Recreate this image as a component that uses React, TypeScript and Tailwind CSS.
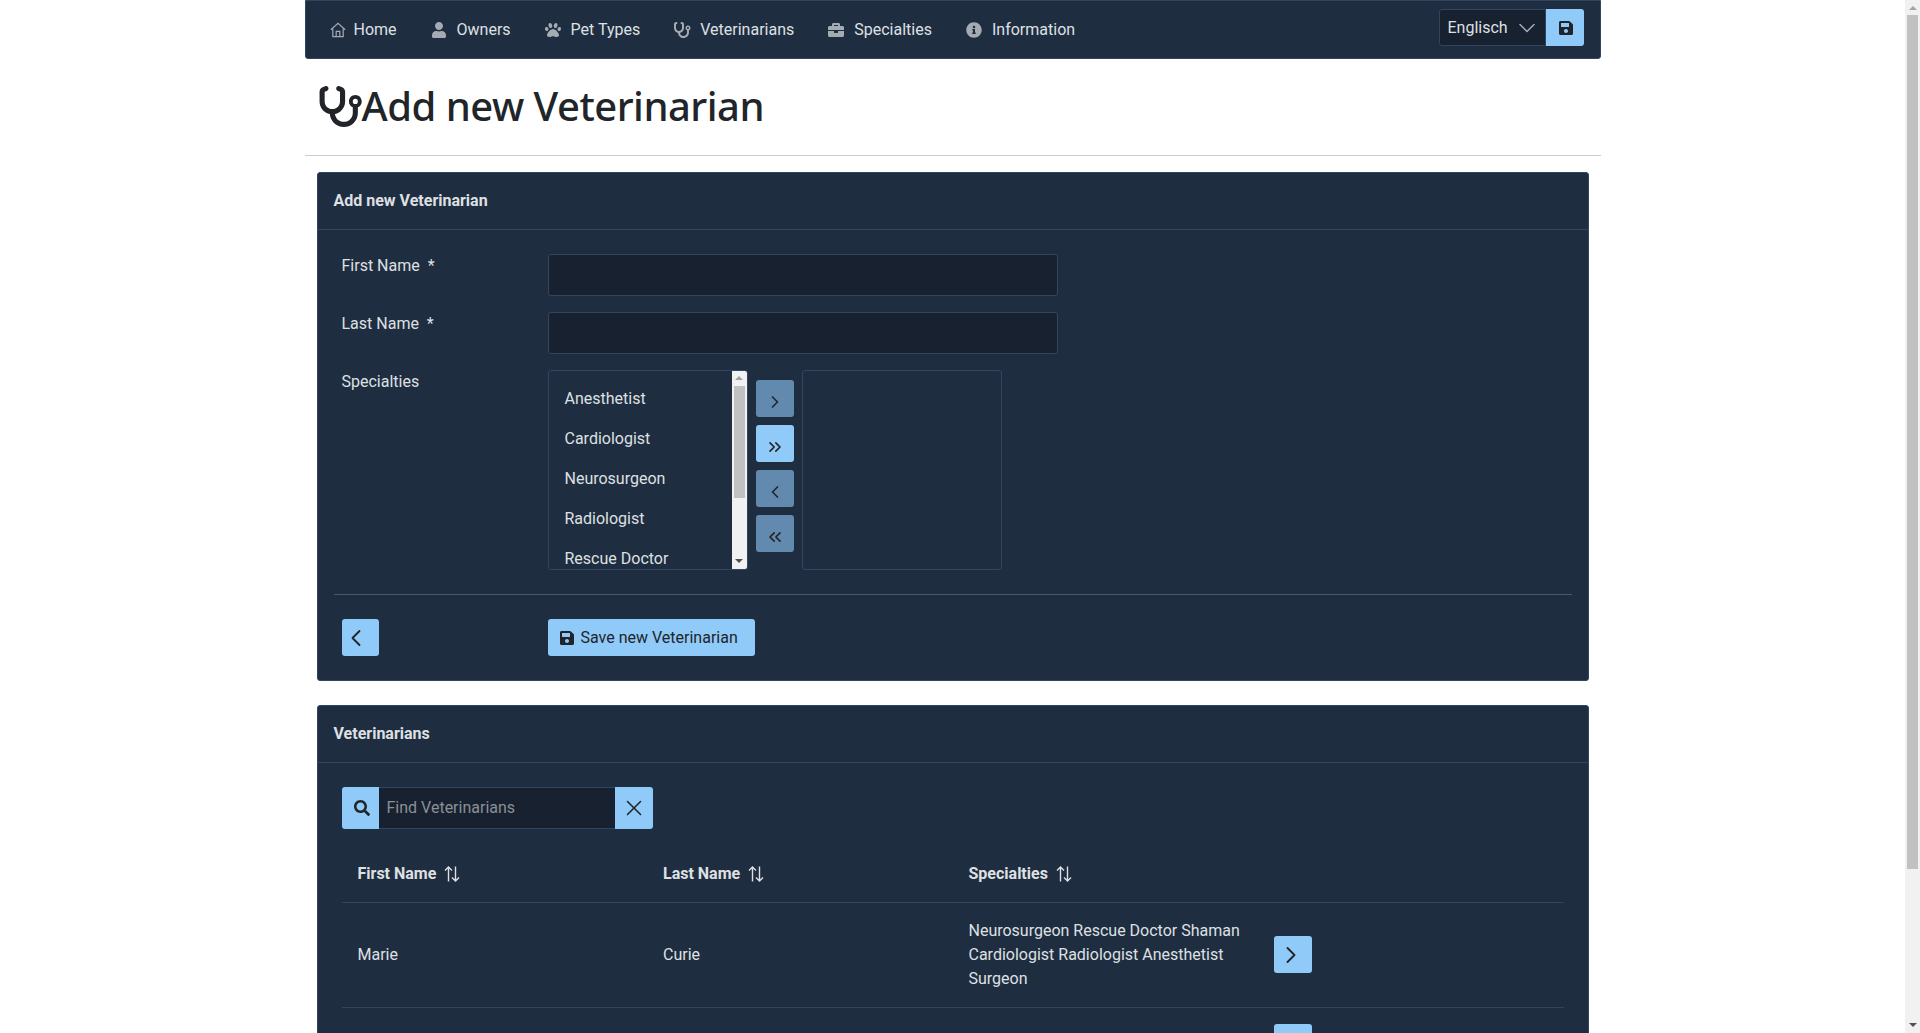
import { FaBriefcase, FaInfoCircle, FaPaw, FaSave, FaSearch, FaUser } from 'react-icons/fa';
import { FaStethoscope } from 'react-icons/fa6';
import { ChevronDown, ChevronLeft, ChevronRight, ChevronsLeft, ChevronsRight, X } from 'lucide-react';
import type { ReactNode } from 'react';

const navItems = [
  { label: 'Owners', icon: <FaUser className="w-[14px] h-[16px]" /> },
  { label: 'Pet Types', icon: <FaPaw className="w-4 h-4" /> },
  { label: 'Veterinarians', icon: <FaStethoscope className="w-[18px] h-4 shrink-0" /> },
  { label: 'Specialties', icon: <FaBriefcase className="w-4 h-4" /> },
  { label: 'Information', icon: <FaInfoCircle className="w-4 h-4" /> },
];

const specialties = ['Anesthetist', 'Cardiologist', 'Neurosurgeon', 'Radiologist', 'Rescue Doctor'];

function HomeIcon() {
  return (
    <svg viewBox="0 0 16 16" className="w-4 h-4" fill="none" stroke="currentColor" strokeWidth="1.2">
      <path d="M.8 7.8 8 1.2l7.2 6.6" />
      <path d="M2.8 6.4V14.6H13.2V6.4" />
      <path d="M6.2 14.6V9.4H9.8V14.6" />
    </svg>
  );
}

function SortIcon() {
  return (
    <svg viewBox="0 0 16 16" className="w-4 h-4" fill="none" stroke="currentColor" strokeWidth="1.4">
      <path d="M4.5 15.5V1M1 4.5 4.5 1 8 4.5" />
      <path d="M11.5 .5V15M8 11.5 11.5 15 15 11.5" />
    </svg>
  );
}

function BlueButton({ children, disabled, className = 'w-[38px]' }: { children: ReactNode; disabled?: boolean; className?: string }) {
  return (
    <button
      className={`flex items-center justify-center h-[37px] rounded-[3px] text-[#212529] ${disabled ? 'bg-[#6289ae]' : 'bg-[#90caf9]'} ${className}`}
    >
      {children}
    </button>
  );
}

function Panel({ title, children }: { title: string; children: ReactNode }) {
  return (
    <section className="bg-[#1f2d40] border border-[#304562] rounded-[3px]">
      <h2 className="h-[57px] flex items-center px-4 font-bold text-base border-b border-[#304562]">{title}</h2>
      {children}
    </section>
  );
}

function FormRow({ label, children }: { label: string; children: ReactNode }) {
  return (
    <div className="flex">
      <label className="w-[206px] pt-[2px] leading-[19px] whitespace-pre">{label}</label>
      {children}
    </div>
  );
}

export default function App() {
  return (
    <div className="h-screen flex overflow-hidden bg-white font-['Roboto',sans-serif] text-base text-[#dee0e3]">
      <main className="flex-1 min-w-0 overflow-hidden">
        <div className="w-[1296px] mx-auto">
          <nav className="h-[59px] flex items-start justify-between p-2 bg-[#1f2d40] border border-[#304562] rounded-b-[3px]">
            <ul className="flex gap-1">
              <li className="h-[41px] flex items-center gap-2 px-4">
                <span className="text-[#a5abb3]"><HomeIcon /></span>
                Home
              </li>
              {navItems.map((item) => (
                <li key={item.label} className="h-[41px] flex items-center gap-2 px-4">
                  <span className="w-4 -ml-[2px] mr-[2px] flex justify-center text-[#a5abb3]">{item.icon}</span>
                  {item.label}
                </li>
              ))}
            </ul>
            <div className="flex mr-2">
              <div className="w-[107px] h-[37px] flex items-center justify-between pl-2 pr-[4px] bg-[#17212f] border border-[#304562] rounded-l-[3px]">
                Englisch
                <ChevronDown className="w-7 h-7 text-[#a5abb3]" strokeWidth={1.3} />
              </div>
              <BlueButton className="w-[38px] rounded-l-none">
                <FaSave className="w-[14px] h-4 ml-[3px]" />
              </BlueButton>
            </div>
          </nav>

          <h1 className="h-[97px] flex items-center pl-[12px] pb-[2px] border-b border-[#cccccc] text-[#212529] text-[40px] tracking-[-0.5px] font-medium font-['Noto_Sans',sans-serif]">
            <FaStethoscope className="w-[46px] h-[41px] -mr-[1px] shrink-0" />
            Add new Veterinarian
          </h1>

          <div className="mx-3 mt-4 flex flex-col gap-6">
            <Panel title="Add new Veterinarian">
              <div className="p-6 px-4">
                <div className="flex flex-col gap-4 px-2">
                  <FormRow label="First Name  *">
                    <input className="w-[510px] h-[42px] bg-[#17212f] border border-[#304562] rounded-[3px]" />
                  </FormRow>
                  <FormRow label="Last Name  *">
                    <input className="w-[510px] h-[42px] bg-[#17212f] border border-[#304562] rounded-[3px]" />
                  </FormRow>
                  <FormRow label="Specialties">
                    <div className="flex">
                      <div className="w-[200px] h-[200px] flex border border-[#304562] rounded-[3px] overflow-hidden">
                        <ul className="flex-1 pt-2 overflow-hidden">
                          {specialties.map((s) => (
                            <li key={s} className="h-10 flex items-center px-4">{s}</li>
                          ))}
                        </ul>
                        <div className="w-[15px] bg-[#f1f1f1] flex flex-col items-center">
                          <span className="mt-[5px] border-x-[4px] border-x-transparent border-b-[4px] border-b-[#a3a3a3]" />
                          <span className="mt-[6px] w-[11px] h-[112px] bg-[#c1c1c1]" />
                          <span className="mt-auto mb-[6px] border-x-[4px] border-x-transparent border-t-[4px] border-t-[#505050]" />
                        </div>
                      </div>
                      <div className="w-[54px] flex flex-col items-center gap-2 pt-[10px]">
                        <BlueButton disabled><ChevronRight className="w-5 h-5 mt-[7px]" strokeWidth={2} /></BlueButton>
                        <BlueButton><ChevronsRight className="w-5 h-5 mt-[7px]" strokeWidth={2} /></BlueButton>
                        <BlueButton disabled><ChevronLeft className="w-5 h-5 mt-[7px]" strokeWidth={2} /></BlueButton>
                        <BlueButton disabled><ChevronsLeft className="w-5 h-5 mt-[7px]" strokeWidth={2} /></BlueButton>
                      </div>
                      <div className="w-[200px] h-[200px] border border-[#304562] rounded-[3px]" />
                    </div>
                  </FormRow>
                </div>
                <hr className="my-6 border-[#4b5a6b]" />
                <div className="flex px-2">
                  <div className="w-[206px]">
                    <BlueButton className="w-[37px]"><ChevronLeft className="w-7 h-7 -ml-[9px]" strokeWidth={1.6} /></BlueButton>
                  </div>
                  <button className="h-[37px] w-[207px] flex items-center gap-[7px] pl-3 rounded-[3px] bg-[#90caf9] text-[#212529]">
                    <FaSave className="w-[14px] h-4" />
                    Save new Veterinarian
                  </button>
                </div>
              </div>
            </Panel>

            <Panel title="Veterinarians">
              <div className="px-6 pt-6 pb-6">
                <div className="flex h-[42px] w-[311px]">
                  <span className="w-[37px] pl-[3px] flex items-center justify-center bg-[#90caf9] text-[#212529] rounded-l-[3px]">
                    <FaSearch className="w-4 h-4" />
                  </span>
                  <input
                    placeholder="Find Veterinarians"
                    className="flex-1 min-w-0 px-2 bg-[#17212f] border-y border-[#304562] placeholder:text-[#8b9097]"
                  />
                  <span className="w-[38px] flex items-center justify-center bg-[#90caf9] text-[#212529] rounded-r-[3px]">
                    <X className="w-[26px] h-[26px]" strokeWidth={1.5} />
                  </span>
                </div>
                <table className="w-full mt-[15px] table-fixed text-left">
                  <thead>
                    <tr className="border-b border-[#304562]">
                      {['First Name', 'Last Name', 'Specialties'].map((h) => (
                        <th key={h} className="h-[58px] px-4 pt-[2px] font-bold">
                          <span className="flex items-center gap-2">{h}<SortIcon /></span>
                        </th>
                      ))}
                      <th />
                    </tr>
                  </thead>
                  <tbody>
                    <tr className="border-b border-[#304562]">
                      <td className="p-4">Marie</td>
                      <td className="p-4">Curie</td>
                      <td className="p-4 leading-6">Neurosurgeon Rescue Doctor Shaman Cardiologist Radiologist Anesthetist Surgeon</td>
                      <td className="p-4"><BlueButton><ChevronRight className="w-7 h-7 -ml-[5px]" strokeWidth={1.6} /></BlueButton></td>
                    </tr>
                    <tr>
                      <td className="p-4" colSpan={3} />
                      <td className="p-4"><BlueButton><ChevronRight className="w-7 h-7 -ml-[5px]" strokeWidth={1.6} /></BlueButton></td>
                    </tr>
                  </tbody>
                </table>
              </div>
            </Panel>
          </div>
        </div>
      </main>

      {/* the page's own scrollbar, headless chrome doesn't paint one */}
      <div className="w-[15px] shrink-0 bg-[#f1f1f1] flex flex-col items-center">
        <span className="mt-[6px] border-x-[4px] border-x-transparent border-b-[4px] border-b-[#a3a3a3]" />
        <span className="mt-[5px] w-[11px] h-[854px] bg-[#c1c1c1]" />
        <span className="mt-auto mb-[6px] border-x-[4px] border-x-transparent border-t-[4px] border-t-[#505050]" />
      </div>
    </div>
  );
}
